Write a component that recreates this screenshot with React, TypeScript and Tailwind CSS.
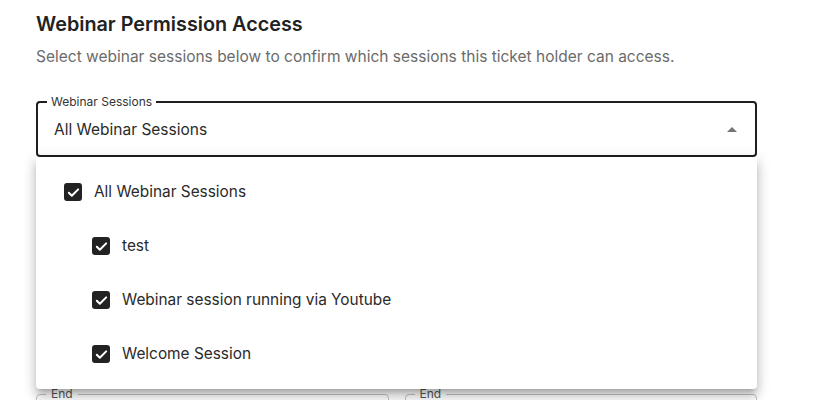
import React from "react";

const font = { fontFamily: "Inter, 'Noto Sans', sans-serif" };

function Check() {
  return (
    <span className="flex h-[18px] w-[18px] shrink-0 items-center justify-center rounded-[3px] bg-[#222222]">
      <svg width="15" height="15" viewBox="0 0 24 24" fill="none">
        <path d="M4.5 12.5l4.8 4.8L19.5 7" stroke="white" strokeWidth="3.2" strokeLinecap="round" strokeLinejoin="round" />
      </svg>
    </span>
  );
}

function Item({ label, nested }: { label: string; nested?: boolean }) {
  return (
    <div className={`flex h-[54px] items-center gap-3 ${nested ? "pl-[56px]" : "pl-[28px]"}`}>
      <Check />
      <span className="text-[15.4px] text-[#2a2a2a]">{label}</span>
    </div>
  );
}

function EndField() {
  return (
    <div className="relative h-[56px] flex-1 rounded-[4px] border border-[#c4c4c4]">
      <span className="absolute -top-[9px] left-[9px] bg-white px-[5px] text-[12px] leading-[16px] text-[#555]">End</span>
    </div>
  );
}

export default function App() {
  return (
    <div className="h-[400px] w-[837px] overflow-hidden bg-white" style={font}>
      <div className="relative ml-9 w-[721px] pt-[11px]">
        <h2 className="text-[19.8px] font-semibold leading-[26px] text-[#222]">Webinar Permission Access</h2>
        <p className="mt-[9px] text-[15.5px] leading-[22px] text-[#6b6b6b]">
          Select webinar sessions below to confirm which sessions this ticket holder can access.
        </p>
        <div className="relative mt-[33px] flex h-[56px] items-center rounded-[4px] border-2 border-[#1f1f1f] pl-4 pr-4">
          <span className="absolute -top-[9px] left-[9px] bg-white px-[4px] text-[12px] leading-[16px] text-[#333]">
            Webinar Sessions
          </span>
          <span className="flex-1 pt-[2px] text-[15.5px] text-[#2a2a2a]">All Webinar Sessions</span>
          <svg width="10" height="5" viewBox="0 0 10 5" className="mr-[2px]">
            <path d="M0 5L5 0L10 5Z" fill="#757575" />
          </svg>
        </div>
        <div className="h-[237px]" />
        <div className="flex gap-4">
          <EndField />
          <EndField />
        </div>
        <div className="absolute left-0 top-[157px] z-10 w-[721px] rounded-b-[4px] bg-white py-[8px] shadow-[0_5px_5px_-3px_rgba(0,0,0,0.2),0_8px_10px_1px_rgba(0,0,0,0.14),0_3px_14px_2px_rgba(0,0,0,0.12)]">
          <Item label="All Webinar Sessions" />
          <Item label="test" nested />
          <Item label="Webinar session running via Youtube" nested />
          <Item label="Welcome Session" nested />
        </div>
      </div>
    </div>
  );
}
